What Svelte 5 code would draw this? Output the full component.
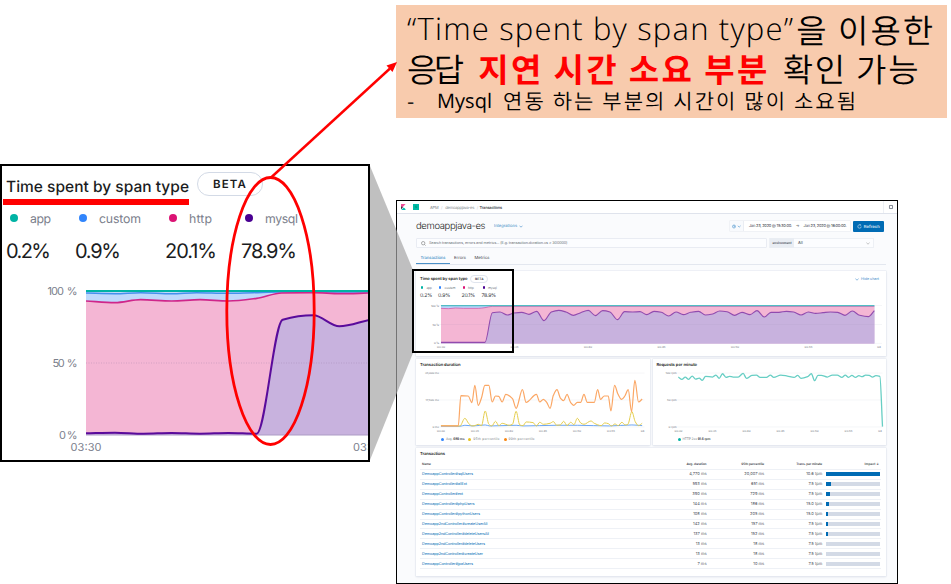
<script>
  // Spreads the letters of a text so that it takes up the given width.
  function fit(node, width) {
    const range = document.createRange();
    range.selectNodeContents(node);
    const natural = range.getBoundingClientRect().width;
    const count = Math.max(1, node.textContent.length - 1);
    node.style.letterSpacing = `${(width - natural) / count}px`;
  }

  // Monotone cubic path; points are read in thirds of a pixel from an origin.
  function curve(raw, ox, oy) {
    const p = raw.map(([x, y]) => [ox + x / 3, oy + y / 3]);
    const n = p.length;
    const d = [];
    for (let i = 0; i < n - 1; i++) d.push((p[i + 1][1] - p[i][1]) / (p[i + 1][0] - p[i][0]));
    const m = p.map((_, i) => {
      if (i === 0) return d[0];
      if (i === n - 1) return d[n - 2];
      if (d[i - 1] * d[i] <= 0) return 0;
      return (2 * d[i - 1] * d[i]) / (d[i - 1] + d[i]);
    });
    let s = `M${p[0][0].toFixed(2)},${p[0][1].toFixed(2)}`;
    for (let i = 0; i < n - 1; i++) {
      const h = (p[i + 1][0] - p[i][0]) / 3;
      s += `C${[p[i][0] + h, p[i][1] + m[i] * h, p[i + 1][0] - h, p[i + 1][1] - m[i + 1] * h, p[i + 1][0], p[i + 1][1]].map((v) => v.toFixed(2)).join(',')}`;
    }
    return s;
  }

  const bigHttp = curve([[258,63],[345,68],[422,59],[515,63],[600,59],[685,63],[770,55],[845,39],[940,38],[1020,41],[1107,39]], 0, 280);
  const bigCustom = curve([[258,39],[345,41],[422,38],[515,41],[590,38],[680,40],[760,38],[845,36],[1107,36]], 0, 280);
  const bigMysql = curve([[258,460],[345,458],[430,461],[515,459],[600,461],[685,459],[770,461],[848,119],[940,106],[1018,139],[1107,120]], 0, 280);

  const mysql = curve([[93,232],[225,232],[247,143],[270,141],[292,150],[312,144],[335,142],[357,148],[380,139],[402,167],[424,141],[446,136],[468,141],[490,151],[512,143],[535,136],[556,152],[578,137],[600,141],[622,164],[644,140],[668,141],[690,140],[710,149],[732,139],[754,142],[776,153],[798,141],[820,149],[842,142],[866,139],[886,150],[908,147],[929,138],[951,140],[974,151],[996,142],[1020,149],[1041,137],[1063,156],[1083,142],[1107,142],[1129,139],[1151,141],[1173,150],[1195,141],[1217,145],[1239,143],[1261,141],[1283,142],[1305,151],[1327,138],[1349,151],[1375,155],[1393,137]], 410, 265);
  const http = curve([[93,130],[115,131],[137,129],[160,130],[205,130],[225,128],[247,124],[1393,124]], 410, 265);

  const p99 = curve([[93,213],[145,213],[153,122],[175,123],[186,143],[195,91],[205,151],[215,128],[225,91],[237,91],[247,141],[257,123],[267,124],[277,141],[288,118],[308,131],[319,160],[338,104],[349,142],[380,118],[390,141],[401,133],[411,142],[421,160],[431,121],[442,104],[452,129],[462,137],[472,118],[483,143],[492,151],[503,142],[513,142],[523,118],[533,142],[554,142],[564,104],[573,133],[584,123],[596,123],[604,168],[615,91],[625,117],[636,133],[646,123],[656,104],[666,170],[676,76],[687,141],[698,132]], 410, 355);
  const p95 = curve([[93,212],[150,213],[165,190],[176,205],[186,213],[195,212],[205,208],[215,212],[226,168],[237,208],[246,213],[257,199],[267,212],[277,205],[298,211],[308,208],[319,169],[330,210],[340,212],[349,201],[370,203],[380,213],[390,202],[401,208],[421,205],[431,200],[441,211],[452,210],[462,199],[472,212],[483,202],[493,209],[503,190],[513,204],[523,208],[544,198],[554,205],[575,212],[585,204],[596,206],[606,213],[616,207],[626,212],[637,202],[647,210],[655,208],[667,170],[677,200],[687,212],[698,205]], 410, 355);
  const avg = curve([[93,214],[150,214],[165,211],[190,213],[226,210],[240,213],[319,211],[340,213],[440,211],[503,211],[600,213],[667,210],[698,212]], 410, 355);
  const rpm = curve([[97,66],[108,73],[118,66],[128,73],[139,63],[149,72],[160,69],[169,76],[179,64],[200,66],[210,60],[220,70],[230,56],[241,67],[251,64],[262,66],[277,66],[292,55],[302,70],[318,61],[332,60],[343,67],[362,67],[374,60],[384,67],[405,60],[425,63],[445,67],[456,61],[466,70],[486,65],[497,56],[507,77],[517,61],[527,61],[545,66],[560,60],[575,60],[589,67],[599,60],[609,67],[619,61],[630,67],[640,62],[650,65],[660,60],[671,61],[681,66],[691,62],[703,64],[711,215]], 645, 355);

  const spans = [
    { name: 'app', value: '0.2%', color: '#00b3a4', w: 69, lw: 21, vw: 45, sw: 18, slw: 5.5, svw: 12.3 },
    { name: 'custom', value: '0.9%', color: '#3185fc', w: 90, lw: 42, vw: 46, sw: 23.5, slw: 11, svw: 12.3 },
    { name: 'http', value: '20.1%', color: '#db1374', w: 76, lw: 23, vw: 52, sw: 20, slw: 6, svw: 13.7 },
    { name: 'mysql', value: '78.9%', color: '#490092', w: 70, lw: 33, vw: 56, sw: 20, slw: 9, svw: 14.7 }
  ];

  const times = ['03:30', '03:35', '03:40', '03:45', '03:50', '03:55'];

  const rows = [
    ['DemoappController#sqlUsers', 51, '4,770 ms', '20,007 ms', '10.6 tpm', 100],
    ['DemoappController#allExt', 45, '593 ms', '651 ms', '7.5 tpm', 9],
    ['DemoappController#ext', 41, '390 ms', '729 ms', '7.5 tpm', 6.5],
    ['DemoappController#phpUsers', 52.5, '144 ms', '186 ms', '15.0 tpm', 4.8],
    ['DemoappController#pythonUsers', 58, '108 ms', '205 ms', '15.0 tpm', 3.6],
    ['Demoapp2ndController#createUserAll', 65.5, '142 ms', '157 ms', '7.5 tpm', 2.6],
    ['Demoapp2ndController#deleteUsersAll', 67, '137 ms', '152 ms', '7.5 tpm', 2.6],
    ['Demoapp2ndController#deleteUsers', 63, '13 ms', '18 ms', '7.5 tpm', 0],
    ['Demoapp2ndController#createUser', 61, '13 ms', '18 ms', '7.5 tpm', 0],
    ['DemoappController#jpaUsers', 51, '7 ms', '10 ms', '7.5 tpm', 0]
  ];
</script>

<main class="slide">
  <section class="dashboard">
    <header class="topbar">
      <svg class="logo" viewBox="0 0 5 6"><path d="M0 0h4.6L0 5z" fill="#f04e98" /><path d="M0 2.6v2.8l2-2.3z" fill="#343741" /><path d="M.4 6 2.6 3.5Q4.4 4.4 4.7 6z" fill="#00bfb3" /></svg>
      <span class="space"><span>s</span></span>
      <nav class="crumbs">
        <span use:fit={8.5}>APM</span><i>/</i><span use:fit={29}>demoappjava-es</span><i>/</i><b use:fit={22.5}>Transactions</b>
      </nav>
      <span class="help"><svg viewBox="0 0 6 6"><circle cx="3" cy="3" r="1.7" fill="none" stroke="#69707d" stroke-width=".8" /><path d="M1.2 1.2l.7.7M4.1 4.1l.7.7M4.8 1.2l-.7.7M1.9 4.1l-.7.7" stroke="#69707d" stroke-width=".8" /></svg></span>
    </header>

    <div class="page">
      <div class="titlebar">
        <h1><span use:fit={69.5}>demoappjava-es</span></h1>
        <a class="integrations" href="#i"><span use:fit={23}>Integrations</span><svg viewBox="0 0 4 3"><path d="M.5 .7 2 2.2 3.5 .7" fill="none" stroke="#3f8aca" stroke-width=".6" /></svg></a>
        <div class="picker">
          <span class="quick"><svg viewBox="0 0 9 5"><circle cx="2" cy="2.5" r="1.5" fill="none" stroke="#4590cc" stroke-width=".6" /><path d="M2 1.5v1h.8M5.8 1.8 7.2 3.1 8.6 1.8" fill="none" stroke="#4590cc" stroke-width=".6" /></svg></span>
          <span class="date" use:fit={43}>Jan 23, 2020 @ 15:30:00.</span>
          <span class="to">→</span>
          <span class="date" use:fit={43}>Jan 23, 2020 @ 16:00:00.</span>
        </div>
        <button class="refresh"><svg viewBox="0 0 5 5"><path d="M4.2 2.5A1.7 1.7 0 1 1 3.3 1M3.2.2v1h1" fill="none" stroke="#fff" stroke-width=".5" /></svg><span use:fit={16}>Refresh</span></button>
      </div>

      <div class="filters">
        <div class="search"><svg viewBox="0 0 5 5"><circle cx="2.2" cy="2.2" r="1.7" fill="none" stroke="#777" stroke-width=".6" /><path d="m3.4 3.4 1.2 1.2" stroke="#777" stroke-width=".6" /></svg><span use:fit={138.5}>Search transactions, errors and metrics... (E.g. transaction.duration.us &gt; 300000)</span></div>
        <div class="env"><b><span use:fit={19}>environment</span></b><span class="all">All</span><svg viewBox="0 0 4 3"><path d="M.4 .7 2 2.2 3.6 .7" fill="none" stroke="#888" stroke-width=".5" /></svg></div>
      </div>

      <nav class="tabs"><span class="tab on"><span use:fit={25}>Transactions</span></span><span class="tab"><span use:fit={12}>Errors</span></span><span class="tab"><span use:fit={15}>Metrics</span></span></nav>

      <section class="card breakdown">
        <div class="cardhead">
          <h2><span use:fit={47.5}>Time spent by span type</span></h2><span class="beta"><span use:fit={8.5}>BETA</span></span>
          <a class="hide" href="#h"><svg viewBox="0 0 4 3"><path d="M.4 .7 2 2.2 3.6 .7" fill="none" stroke="#3f8aca" stroke-width=".6" /></svg><span use:fit={18}>Hide chart</span></a>
        </div>
        <div class="legend">
          {#each spans as s}
            <div class="entry" style:width="{s.sw}px">
              <div class="key"><i style:background={s.color}></i><span use:fit={s.slw}>{s.name}</span></div>
              <div><span class="val" use:fit={s.svw}>{s.value}</span></div>
            </div>
          {/each}
        </div>
        <svg class="plot" viewBox="416 301 470 54">
          <path d="M438 305.5H882M438 324.5H882M438 343.4H882" stroke="#eef0f4" stroke-width=".6" />
          <path d="M441 305.5H874.4V343.4H441z" fill="#b8d6fb" />
          <path d="{http}V343.4H441z" fill="#f4b6d4" />
          <path d="{mysql}V343.4H441z" fill="#c8b2de" />
          <path d={http} fill="none" stroke="#d05aa8" stroke-width=".8" />
          <path d={mysql} fill="none" stroke="#914bae" stroke-width="1.1" />
          <path d="M441 305.6H874.4" stroke="#52bcc4" stroke-width="1.1" />
          <path d="M441 324.5H874.4" stroke="#9183a5" stroke-opacity=".2" stroke-width=".4" />
          <g class="tick">
            <text x="439" y="306.8" text-anchor="end" textLength="8">100 %</text>
            <text x="439" y="325.8" text-anchor="end" textLength="6.5">50 %</text>
            <text x="439" y="344.3" text-anchor="end" textLength="5">0 %</text>
            {#each times as t, i}<text x={441 + i * 73.5} y="348" text-anchor="middle" textLength="8">{t}</text>{/each}
            <text x="879" y="348" text-anchor="middle">04</text>
          </g>
        </svg>
      </section>

      <div class="pair">
        <section class="card duration">
          <h2><span use:fit={40.5}>Transaction duration</span></h2>
          <svg class="plot" viewBox="416 369 234 65">
            <path d="M438 373H645M438 400H645M438 427H645" stroke="#eef0f4" stroke-width=".6" />
            <path d={avg} fill="none" stroke="#5b9cf2" stroke-width=".9" />
            <path d={p95} fill="none" stroke="#e4cd4d" stroke-width="1" />
            <path d={p99} fill="none" stroke="#fba765" stroke-width="1.2" />
            <g class="tick">
              <text x="439" y="374.3" text-anchor="end" textLength="14">35,000 ms</text>
              <text x="439" y="401.3" text-anchor="end" textLength="13.5">17,500 ms</text>
              <text x="439" y="427.9" text-anchor="end" textLength="6.5">0 ms</text>
              {#each times as t, i}<text x={441 + i * 34.1} y="432" text-anchor="middle" textLength="8">{t}</text>{/each}
              <text x="643" y="432" text-anchor="middle">04</text>
            </g>
          </svg>
          <div class="keys"><i class="blue"></i><span use:fit={18.5}>Avg. <b>689 ms</b></span><i class="yellow"></i><span use:fit={26}>95th percentile</span><i class="orange"></i><span use:fit={26}>99th percentile</span></div>
        </section>
        <section class="card rate">
          <h2><span use:fit={40.5}>Requests per minute</span></h2>
          <svg class="plot" viewBox="652 369 234 65">
            <path d="M674 373H882M674 400H882M674 427H882" stroke="#eef0f4" stroke-width=".6" />
            <path d={rpm} fill="none" stroke="#67cec4" stroke-width="1.3" />
            <g class="tick">
              <text x="675.5" y="374.3" text-anchor="end" textLength="11">100 rpm</text>
              <text x="675.5" y="401.3" text-anchor="end" textLength="9.5">50 rpm</text>
              <text x="675.5" y="427.9" text-anchor="end" textLength="8">0 rpm</text>
              {#each times as t, i}<text x={677.5 + i * 34.1} y="432" text-anchor="middle" textLength="8">{t}</text>{/each}
              <text x="879.5" y="432" text-anchor="middle">04</text>
            </g>
          </svg>
          <div class="keys"><i class="teal"></i><span use:fit={28}>HTTP 2xx <b>91.6 rpm</b></span></div>
        </section>
      </div>

      <section class="card table">
        <h2><span use:fit={25}>Transactions</span></h2>
        <div class="row head"><span class="name"><span use:fit={9}>Name</span></span><span class="n1"><span use:fit={20}>Avg. duration</span></span><span class="n2"><span use:fit={23}>95th percentile</span></span><span class="n3"><span use:fit={26}>Trans. per minute</span></span><span class="impact"><span use:fit={11}>Impact</span> ↓</span></div>
        {#each rows as [name, w, a, b, c, pct]}
          <div class="row"><span class="name"><span use:fit={w}>{name}</span></span><span class="n1">{a}</span><span class="n2">{b}</span><span class="n3">{c}</span><span class="bar"><i style:width="{pct}%"></i></span></div>
        {/each}
      </section>
    </div>
  </section>

  <svg class="projection" viewBox="0 0 951 584">
    <path d="M370 166 413 270V353L370 460z" fill="#a5a5a5" fill-opacity=".7" />
    <rect x="413" y="270" width="100" height="82" fill="none" stroke="#000" stroke-width="2" />
  </svg>

  <section class="zoomed">
    <div class="zhead"><h2><span use:fit={183}>Time spent by span type</span></h2><span class="zbeta"><span use:fit={33}>BETA</span></span></div>
    <div class="zlegend">
      {#each spans as s}
        <div class="zentry" style:width="{s.w}px">
          <div class="zkey"><i style:background={s.color}></i><span use:fit={s.lw}>{s.name}</span></div>
          <div class="zval"><span use:fit={s.vw}>{s.value}</span></div>
        </div>
      {/each}
    </div>
    <svg class="zplot" viewBox="2 280 366 180">
      <path d="M86 291H368V435H86z" fill="#bfd9fc" />
      <path d="{bigHttp}V435H86z" fill="#f4b6d4" />
      <path d="{bigMysql}V435H86z" fill="#c8b2de" />
      <path d="M86 363H368" stroke="#8a6f9c" stroke-opacity=".3" stroke-width="1" stroke-dasharray="1 1.5" />
      <path d="M86 435H368" stroke="#ad9cc5" stroke-width="1" />
      <path d={bigCustom} fill="none" stroke="#4390ee" stroke-width="1.5" />
      <path d={bigHttp} fill="none" stroke="#cf268a" stroke-width="1.7" />
      <path d={bigMysql} fill="none" stroke="#5a0b9b" stroke-width="2" />
      <path d="M86 291H368" stroke="#00b3a4" stroke-width="2" />
      <g class="ztick">
        <text x="77.5" y="295" text-anchor="end" textLength="30">100 %</text>
        <text x="77.5" y="367" text-anchor="end" textLength="25">50 %</text>
        <text x="77.5" y="439" text-anchor="end" textLength="18.5">0 %</text>
        <text x="86" y="451.3" text-anchor="middle" textLength="31">03:30</text>
        <text x="353" y="451.3" textLength="31">03:35</text>
      </g>
    </svg>
  </section>

  <section class="callout">
    <p class="big"><span class="lat" use:fit={386}>“Time spent by span type”</span><span class="tail" use:fit={137}>을 이용한</span></p>
    <p class="big second"><span use:fit={57}>응답</span><strong use:fit={289}>지연 시간 소요 부분</strong><span use:fit={136}>확인 가능</span></p>
    <p class="small"><span class="dash">-</span><span class="lat" use:fit={55}>Mysql</span><span class="rest" use:fit={353}>연동 하는 부분의 시간이 많이 소요됨</span></p>
  </section>

  <svg class="marks" viewBox="0 0 951 584">
    <path d="M3 202H189" stroke="#f00" stroke-width="6" />
    <ellipse cx="270.5" cy="311" rx="43.7" ry="133.5" fill="none" stroke="#f00" stroke-width="2.8" />
    <path d="M270.5 178 390 68.5" stroke="#f00" stroke-width="2.4" />
    <path d="M397 62 392.5 72 386.5 65.5z" fill="#f00" />
  </svg>
</main>

<style>
  :global(body) { margin: 0; background: #fff; }
  .slide { position: relative; width: 951px; height: 584px; overflow: hidden; background: #fff; font-family: Inter, "Liberation Sans", sans-serif; text-rendering: geometricPrecision; }
  h1, h2, p { margin: 0; }
  svg { display: block; flex: none; }
  span, b, h1, h2, strong { white-space: nowrap; flex: none; }
  a { text-decoration: none; }

  .dashboard { position: absolute; left: 396px; top: 200px; width: 502px; height: 384px; box-sizing: border-box; border: 1px solid #000; background: #fafbfd; color: #343741; font-size: 4px; line-height: 6px; }
  .topbar { display: flex; align-items: center; height: 12px; background: #fff; border-bottom: 1px solid #dfe3ec; padding-left: 4px; }
  .logo { width: 5px; height: 6px; }
  .space { width: 6px; height: 6px; margin-left: 7px; background: #00b9a5; color: #075; display: flex; align-items: center; justify-content: center; font-size: 4px; }
  .crumbs { display: flex; align-items: center; margin-left: 11px; padding-top: 1px; color: #7a7f89; }
  .crumbs i { width: 7px; text-align: center; font-style: normal; color: #c5cad5; }
  .crumbs i + b { margin-left: -1.5px; }
  .crumbs b { color: #343741; font-weight: 500; }
  .help { margin-left: auto; margin-right: 3px; padding-left: 4px; height: 12px; border-left: 1px solid #edf0f5; display: flex; align-items: center; }
  .help svg { width: 6px; height: 6px; }

  .page { padding: 7px 11px 0 19px; }
  .titlebar { display: flex; align-items: center; height: 10px; margin-right: 2px; }
  h1 { font-size: 9.5px; line-height: 10px; font-weight: 300; color: #1a1c21; width: 69px; padding-top: 1px; }
  .integrations { display: flex; align-items: center; gap: 2px; margin-left: 9px; color: #2b7fc0; }
  .integrations svg { width: 4px; height: 3px; }
  .picker { display: flex; align-items: center; width: 120px; height: 10px; margin-left: auto; background: #fff; box-shadow: 0 0 0 .5px #e6e9f0; }
  .quick { width: 13px; height: 10px; display: flex; align-items: center; justify-content: center; background: #f8fafd; border-right: 1px solid #eaedf3; }
  .quick svg { width: 9px; height: 5px; }
  .date { margin-left: 5px; color: #444852; }
  .to { margin-left: 4px; color: #666; }
  .to + .date { margin-left: 4px; }
  .refresh { display: flex; align-items: center; justify-content: center; gap: 1.5px; width: 31px; height: 11px; margin-left: 3px; border: 0; padding: 1px 0 0; box-sizing: border-box; border-radius: 1px; background: #006bb4; color: #fff; font: 500 4.2px/7px Inter, sans-serif; text-rendering: inherit; }
  .refresh svg { width: 5px; height: 5px; }
  .refresh span { padding-top: 1px; }

  .filters { display: flex; margin-top: 7px; height: 10px; }
  .search { width: 345px; padding-left: 4px; display: flex; align-items: center; gap: 3px; background: #fcfdff; border: 1px solid #e9ecf3; border-radius: 1px; color: #696d75; font-size: 3.8px; }
  .search svg { width: 5px; height: 5px; }
  .env { display: flex; align-items: center; margin-left: 2px; width: 103px; border: 1px solid #edf0f5; background: #fcfdff; }
  .env b { width: 24px; height: 10px; background: #e9edf3; display: flex; align-items: center; justify-content: center; font-weight: 600; color: #444852; font-size: 3.2px; }
  .all { margin-left: 4px; }
  .env svg { width: 4px; height: 3px; margin-left: auto; margin-right: 3px; }

  .tabs { display: flex; height: 15px; margin-top: 1px; border-bottom: 1px solid #e3e7ef; width: 470px; }
  .tab { height: 15px; display: flex; align-items: center; margin-right: 8.5px; color: #343741; font-size: 4.2px; padding-top: 4px; box-sizing: border-box; }
  .tab.on { width: 34px; justify-content: center; color: #006bb4; border-bottom: 1px solid #4a90c8; margin-right: 4px; padding-top: 5px; }

  .card { background: #fff; box-shadow: 0 0 0 .5px #e3e7ef, 0 1px 2px #dce1ea; box-sizing: border-box; }
  h2 { font-size: 4.2px; line-height: 6px; font-weight: 600; color: #1a1c21; }
  .breakdown { height: 85px; margin-top: 6px; padding-top: 4px; }
  .cardhead { display: flex; align-items: center; height: 8px; padding-left: 4px; }
  .cardhead h2 { padding-top: 1px; }
  .beta { margin-left: 3px; width: 16px; height: 6px; border: .5px solid #e0e5ee; border-radius: 4px; display: flex; align-items: center; justify-content: center; font-weight: 600; font-size: 3.2px; }
  .hide { display: flex; align-items: center; gap: 2px; margin-left: auto; margin-right: 7px; color: #3f8aca; font-size: 3.8px; }
  .hide svg { width: 4px; height: 3px; }
  .legend { display: flex; height: 18px; padding-left: 4px; }
  .key { display: flex; align-items: center; height: 9px; color: #7a7f89; font-size: 3.4px; }
  .key i { width: 2.4px; height: 2.4px; border-radius: 50%; margin-left: 1px; margin-right: 3px; }
  .val { font-size: 5.2px; line-height: 9px; display: block; width: max-content; }
  .plot { width: 100%; }
  .breakdown .plot { height: 54px; }
  .tick { font-size: 2.9px; fill: #6a6f79; }

  .pair { display: flex; gap: 3px; margin-top: 3px; }
  .duration, .rate { flex: 1; height: 86px; padding-top: 4px; }
  .duration h2, .rate h2, .table h2 { margin-left: 4px; width: max-content; }
  .pair .plot { height: 65px; }
  .keys { display: flex; align-items: center; height: 10px; padding-left: 25px; color: #7a7f89; font-size: 3.3px; }
  .keys i { width: 3px; height: 3px; border-radius: 50%; margin-right: 2px; }
  .keys span + i { margin-left: 4px; }
  .keys b { color: #343741; font-weight: 600; }
  .blue { background: #3185fc; } .yellow { background: #e6c220; } .orange { background: #f98510; } .teal { background: #00b3a4; }

  .table { height: 128px; margin-top: 3px; padding: 4px 5px 0 4px; }
  .table h2 { margin-left: 0; }
  .row { display: flex; align-items: center; height: 9.92px; box-sizing: border-box; border-bottom: 1px solid #eef1f6; font-size: 4px; color: #50545d; }
  .head { height: 11px; margin-top: 1px; font-size: 3.2px; font-weight: 600; color: #343741; }
  .name { width: 240px; padding-left: 2px; color: #006bb4; font-size: 3.8px; }
  .head .name { color: #343741; font-size: 3.2px; }
  .n1, .n2, .n3 { text-align: right; }
  .n1 { width: 44.5px; } .n2 { width: 57.7px; } .n3 { width: 58px; }
  .bar { width: 54px; height: 4px; margin-left: 4px; background: #d3dae6; display: flex; }
  .bar i { background: #006bb4; height: 4px; }
  .impact { width: 57px; text-align: right; }

  .projection, .marks { position: absolute; left: 0; top: 0; width: 951px; height: 584px; }

  .zoomed { position: absolute; left: 0; top: 164px; width: 370px; height: 298px; box-sizing: border-box; border: 2px solid #000; background: #fff; overflow: hidden; color: #1a1c21; }
  .zhead { display: flex; align-items: center; height: 42px; padding-left: 4px; box-sizing: border-box; }
  .zhead h2 { font-size: 15.5px; line-height: 20px; font-weight: 500; color: #1a1c21; width: 182px; }
  .zbeta { width: 64px; height: 22px; margin-left: 9px; margin-top: -6px; border: 1px solid #d3dae6; border-radius: 12px; display: flex; align-items: center; justify-content: center; font-size: 11.5px; font-weight: 600; }
  .zlegend { display: flex; padding-left: 4px; height: 72px; }
  .zkey { display: flex; align-items: center; height: 20px; color: #7b808c; font-size: 12.3px; }
  .zkey i { width: 8px; height: 8px; border-radius: 50%; margin-left: 4px; margin-right: 12px; }
  .zval { font-size: 20px; line-height: 26px; margin-top: 10px; }
  .zplot { width: 366px; height: 180px; }
  .ztick { font-size: 11px; fill: #7b808c; word-spacing: 1.5px; }

  .callout { position: absolute; left: 396px; top: 5px; width: 551px; height: 113px; box-sizing: border-box; padding: 6px 0 0 11px; background: #f8cbad; color: #000; font-family: "Noto Sans CJK KR", sans-serif; overflow: hidden; }
  .lat { font-family: "Open Sans", "Noto Sans CJK KR", sans-serif; }
  .big { display: flex; height: 39px; line-height: 36px; font-size: 33px; font-weight: 350; }
  .big .lat { font-weight: 350; font-size: 31px; }
  .tail { margin-left: 2px; }
  .big strong { color: #f00; font-weight: 700; margin: 0 13px 0 18px; }
  .small { display: flex; height: 26px; line-height: 24px; font-size: 21px; font-weight: 350; }
  .small .lat { font-weight: 400; font-size: 20px; }
  .dash { width: 30px; }
  .rest { margin-left: 11px; }
</style>
